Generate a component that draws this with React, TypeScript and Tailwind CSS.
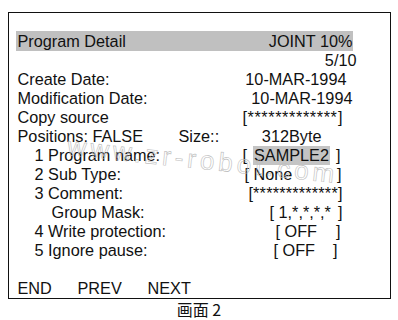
import React from "react";

const Row = ({ pl = "pl-[8.5px]", children }: { pl?: string; children: React.ReactNode }) => (
  <div className={`flex h-[19px] items-center leading-[19px] whitespace-pre ${pl}`}>{children}</div>
);

export default function App() {
  return (
    <div className="w-[398px] h-[320px] bg-white text-[#111] font-['Liberation_Sans',Arial,sans-serif] text-[16.25px] overflow-hidden">
      <div className="ml-[8px] mt-[12px] w-[383px] h-[287px] border-[1.5px] border-[#111] relative flex flex-col pt-[17.5px]">
        <div className="absolute left-[58px] top-[132px] rotate-[6deg] text-[26px] tracking-[4px] leading-[30px] whitespace-nowrap text-transparent [-webkit-text-stroke:0.6px_#bcbcbc] pointer-events-none select-none">
          www.zr-robot.com
        </div>
        <div className="ml-[6.5px] w-[337px] h-[20px] bg-[#c0c0c0] flex items-center justify-between pl-[2px] leading-[20px]">
          <span>Program Detail</span>
          <span>JOINT 10%</span>
        </div>
        <Row>
          <span className="ml-auto mr-[33.5px]">5/10</span>
        </Row>
        <Row>
          <span>Create Date:</span>
          <span className="ml-auto mr-[43.5px]">10-MAR-1994</span>
        </Row>
        <Row>
          <span>Modification Date:</span>
          <span className="ml-auto mr-[37.5px]">10-MAR-1994</span>
        </Row>
        <Row>
          <span>Copy source</span>
          <span className="ml-auto mr-[47.5px] w-[100px] flex justify-between">
            <span>[</span>
            <span className="tracking-[0.6px]">*************</span>
            <span>]</span>
          </span>
        </Row>
        <Row>
          <span className="w-[161px] flex-none">Positions: FALSE</span>
          <span>Size::</span>
          <span className="ml-auto mr-[68.5px]">312Byte</span>
        </Row>
        <Row pl="pl-[25.5px]">
          <span>1 Program name:</span>
          <span className="ml-auto mr-[49.5px] w-[98px] flex items-center justify-between">
            <span>[</span>
            <span className="bg-[#c4c4c4] w-[77px] h-[19px] text-center">SAMPLE2</span>
            <span>]</span>
          </span>
        </Row>
        <Row pl="pl-[25.5px]">
          <span>2 Sub Type:</span>
          <span className="ml-auto mr-[48.5px] w-[97px] flex justify-between">
            <span>[ None</span>
            <span>]</span>
          </span>
        </Row>
        <Row pl="pl-[25.5px]">
          <span>3 Comment:</span>
          <span className="ml-auto mr-[47.5px] w-[94px] flex justify-between">
            <span>[</span>
            <span className="tracking-[0.2px]">*************</span>
            <span>]</span>
          </span>
        </Row>
        <Row pl="pl-[42.5px]">
          <span>Group Mask:</span>
          <span className="ml-auto mr-[47.5px] w-[73px] flex justify-between">
            <span>[ 1,*,*,*,*</span>
            <span>]</span>
          </span>
        </Row>
        <Row pl="pl-[25.5px]">
          <span>4 Write protection:</span>
          <span className="ml-auto mr-[49.5px] w-[65px] flex justify-between">
            <span>[ OFF</span>
            <span>]</span>
          </span>
        </Row>
        <Row pl="pl-[25.5px]">
          <span>5 Ignore pause:</span>
          <span className="ml-auto mr-[52.5px] w-[64px] flex justify-between">
            <span>[ OFF</span>
            <span>]</span>
          </span>
        </Row>
        <div className="mt-auto flex h-[19px] items-center leading-[19px] pl-[8.5px]">
          <span className="w-[60px]">END</span>
          <span className="w-[70px]">PREV</span>
          <span>NEXT</span>
        </div>
      </div>
      <div className="text-center text-[16px] leading-[20px] font-['Noto_Sans_CJK_SC','Liberation_Sans',sans-serif]">
        画面 2
      </div>
    </div>
  );
}
